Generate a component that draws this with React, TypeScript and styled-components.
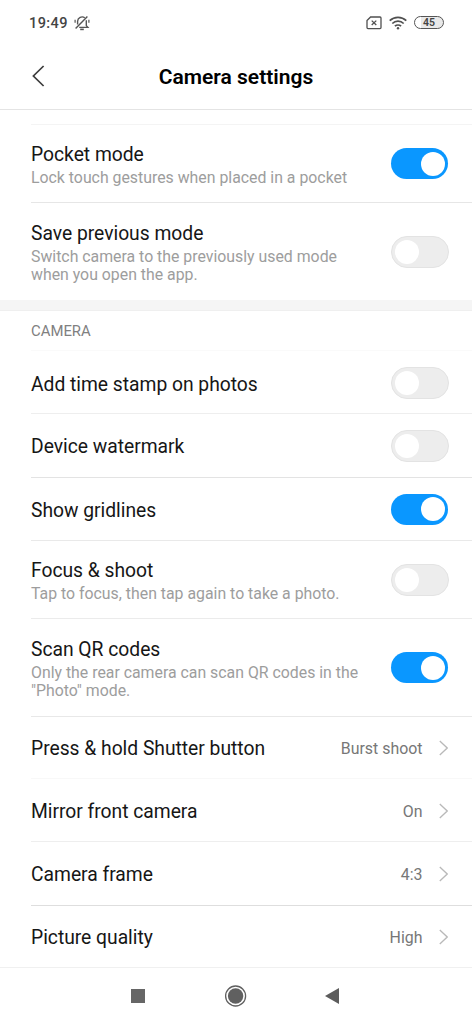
import React from "react";
import styled, { createGlobalStyle } from "styled-components";

const Global = createGlobalStyle`
  * { box-sizing: border-box; }
  body { margin: 0; background: #fff; font-family: Roboto, sans-serif; }
`;

const Screen = styled.div`
  width: 472px;
  height: 1024px;
  display: flex;
  flex-direction: column;
  overflow: hidden;
  background: #fff;
`;

const StatusBar = styled.div`
  height: 44px;
  flex: none;
  display: flex;
  align-items: center;
  justify-content: space-between;
  padding: 1px 28px 0 29px;
`;

const StatusGroup = styled.div<{ $gap: number }>`
  display: flex;
  align-items: center;
  gap: ${(p) => p.$gap}px;
`;

const Clock = styled.span`
  padding-top: 2px;
  font-size: 14.5px;
  line-height: 18px;
  font-weight: 500;
  letter-spacing: 0.4px;
  color: #444;
`;

const Battery = styled.span`
  width: 30px;
  height: 13px;
  border: 1.4px solid #555;
  border-radius: 7px;
  background: linear-gradient(90deg, #fff 22%, #e9e9e9 22%);
  display: flex;
  align-items: center;
  justify-content: center;
  font-size: 10.5px;
  line-height: 11px;
  font-weight: 600;
  color: #444;
`;

const Header = styled.header`
  height: 66px;
  flex: none;
  display: grid;
  grid-template-columns: 60px 1fr 60px;
  align-items: center;
  border-bottom: 1px solid #e4e4e4;
`;

const BackButton = styled.button`
  height: 40px;
  padding: 0 0 2px 32px;
  border: 0;
  background: none;
  display: flex;
  align-items: center;
`;

const Title = styled.h1`
  margin: 0;
  text-align: center;
  font-size: 21px;
  line-height: 26px;
  font-weight: 600;
  color: #000;
`;

const Row = styled.div<{ $h: number; $line?: string; $drop?: number }>`
  height: ${(p) => p.$h}px;
  flex: none;
  margin-left: 31px;
  padding: ${(p) => p.$drop ?? 0}px 24px 0 0;
  display: flex;
  align-items: center;
  justify-content: space-between;
  border-bottom: 1px solid ${(p) => p.$line ?? "transparent"};
`;

const ListTop = styled.div`
  height: 15px;
  flex: none;
  margin-left: 31px;
  border-bottom: 1px solid #f4f4f4;
`;

const Band = styled.div`
  height: 11px;
  flex: none;
  background: #f5f5f5;
  border-bottom: 1px solid #efefef;
`;

const SectionLabel = styled.div`
  height: 40px;
  flex: none;
  margin-left: 31px;
  border-bottom: 1px solid #fafafa;
  font-size: 14.9px;
  line-height: 40px;
  color: #808080;
`;

const Text = styled.div<{ $single: boolean }>`
  display: flex;
  flex-direction: column;
  padding-top: ${(p) => (p.$single ? 3 : 2)}px;
`;

const Label = styled.div`
  font-size: 19.3px;
  line-height: 26px;
  letter-spacing: -0.02px;
  color: #161616;
  white-space: nowrap;
`;

const Note = styled.div`
  font-size: 15.85px;
  line-height: 18.3px;
  padding-top: 1px;
  color: #9d9d9d;
  white-space: pre;
`;

const Track = styled.span<{ $on: boolean }>`
  width: ${(p) => (p.$on ? 57 : 58)}px;
  height: ${(p) => (p.$on ? 31 : 32)}px;
  margin-right: ${(p) => (p.$on ? 0 : -0.5)}px;
  flex: none;
  display: flex;
  align-items: center;
  justify-content: ${(p) => (p.$on ? "flex-end" : "flex-start")};
  padding: 0 3px;
  border-radius: 16px;
  background: ${(p) => (p.$on ? "#0a97ff" : "#ededed")};
  border: ${(p) => (p.$on ? "0" : "1px solid #e3e3e3")};
`;

const Knob = styled.span`
  width: 24px;
  height: 24px;
  border-radius: 50%;
  background: #fff;
`;

const Value = styled.div`
  display: flex;
  align-items: center;
  gap: 15.5px;
  font-size: 15.9px;
  color: #777;
`;

const ValueText = styled.span`
  padding-top: 2px;
`;

const NavBar = styled.nav`
  flex: 1;
  border-top: 1px solid #f0f0f0;
  display: flex;
  justify-content: center;
  align-items: center;
  gap: 78px;
  padding-right: 2px;
`;

type Item = {
  label: string;
  note?: string;
  on?: boolean;
  value?: string;
  h: number;
  line?: string;
  drop?: number;
};

const general: Item[] = [
  { label: "Pocket mode", note: "Lock touch gestures when placed in a pocket", on: true, h: 78, line: "#e6e6e6" },
  { label: "Save previous mode", note: "Switch camera to the previously used mode\nwhen you open the app.", on: false, h: 97, drop: 1 },
];

const camera: Item[] = [
  { label: "Add time stamp on photos", on: false, h: 63, line: "#eeeeee", drop: 2 },
  { label: "Device watermark", on: false, h: 64, line: "#e3e3e3" },
  { label: "Show gridlines", on: true, h: 63, line: "#e9e9e9" },
  { label: "Focus & shoot", note: "Tap to focus, then tap again to take a photo.", on: false, h: 78, line: "#ebebeb" },
  { label: "Scan QR codes", note: "Only the rear camera can scan QR codes in the\n\"Photo\" mode.", on: true, h: 98, line: "#e8e8e8" },
  { label: "Press & hold Shutter button", value: "Burst shoot", h: 62, line: "#f8f8f8" },
  { label: "Mirror front camera", value: "On", h: 63, line: "#eeeeee", drop: 1 },
  { label: "Camera frame", value: "4:3", h: 64, line: "#dedede" },
  { label: "Picture quality", value: "High", h: 61, drop: 1 },
];

function Setting({ item }: { item: Item }) {
  return (
    <Row $h={item.h} $line={item.line} $drop={item.drop}>
      <Text $single={!item.note}>
        <Label>{item.label}</Label>
        {item.note && <Note>{item.note}</Note>}
      </Text>
      {item.value ? (
        <Value>
          <ValueText>{item.value}</ValueText>
          <svg width="10" height="16" viewBox="0 0 10 16" fill="none" stroke="#b9b9b9" strokeWidth="1.3">
            <path d="M1.8 1 9.2 8 1.8 15" />
          </svg>
        </Value>
      ) : (
        <Track $on={!!item.on}>
          <Knob />
        </Track>
      )}
    </Row>
  );
}

function MutedBell() {
  return (
    <svg width="16" height="16" viewBox="0 0 16 16" fill="none" stroke="#555" strokeWidth="1.4">
      <path d="M3.6 9.4V6.2a4.5 4.5 0 0 1 7.2-3.4M12.3 5.2v5.4l1.6 1.8H5.2" />
      <path d="M1.6 13.6 13.4 1.4" />
      <path d="M6.2 14.4h3.6" strokeWidth="1.6" />
      <path d="M1.1 4.8v3M14.9 4.8v3" strokeWidth="1.2" />
    </svg>
  );
}

export default function App() {
  return (
    <Screen>
      <Global />
      <StatusBar>
        <StatusGroup $gap={6}>
          <Clock>19:49</Clock>
          <MutedBell />
        </StatusGroup>
        <StatusGroup $gap={7}>
          <svg width="16" height="14" viewBox="0 0 16 14" fill="none" stroke="#505050" strokeWidth="1.3">
            <path d="M4.6 1H14a1 1 0 0 1 1 1v9.6a1 1 0 0 1-1 1H2a1 1 0 0 1-1-1V4.6z" />
            <path d="m5.7 4.6 4.6 4.4m0-4.4L5.7 9" />
          </svg>
          <svg width="18" height="14" viewBox="0 0 18 14" fill="none" stroke="#505050" strokeWidth="1.7">
            <path d="M.7 4.7a12 12 0 0 1 16.6 0M3.3 7.5a8.2 8.2 0 0 1 11.4 0M5.9 10.2a4.6 4.6 0 0 1 6.2 0" />
            <circle cx="9" cy="12.3" r="1.2" fill="#505050" stroke="none" />
          </svg>
          <Battery>45</Battery>
        </StatusGroup>
      </StatusBar>
      <Header>
        <BackButton aria-label="Back">
          <svg width="14" height="22" viewBox="0 0 14 22" fill="none" stroke="#3c3c3c" strokeWidth="1.7">
            <path d="M11.6 1 1.4 11l10.2 10" />
          </svg>
        </BackButton>
        <Title>Camera settings</Title>
      </Header>
      <ListTop />
      {general.map((item) => (
        <Setting key={item.label} item={item} />
      ))}
      <Band />
      <SectionLabel>CAMERA</SectionLabel>
      {camera.map((item) => (
        <Setting key={item.label} item={item} />
      ))}
      <NavBar>
        <svg width="16" height="16" viewBox="0 0 16 16">
          <path d="M1 1h14v14H1z" fill="#666" />
        </svg>
        <svg width="22" height="22" viewBox="-0.6 0 22 22" overflow="visible">
          <circle cx="11" cy="11" r="10" fill="none" stroke="#606060" strokeWidth="1.3" />
          <circle cx="11" cy="11" r="7.7" fill="#606060" />
        </svg>
        <svg width="16" height="18" viewBox="0 0 16 18">
          <path d="M15 1v16L1 9z" fill="#5c5c5c" />
        </svg>
      </NavBar>
    </Screen>
  );
}
